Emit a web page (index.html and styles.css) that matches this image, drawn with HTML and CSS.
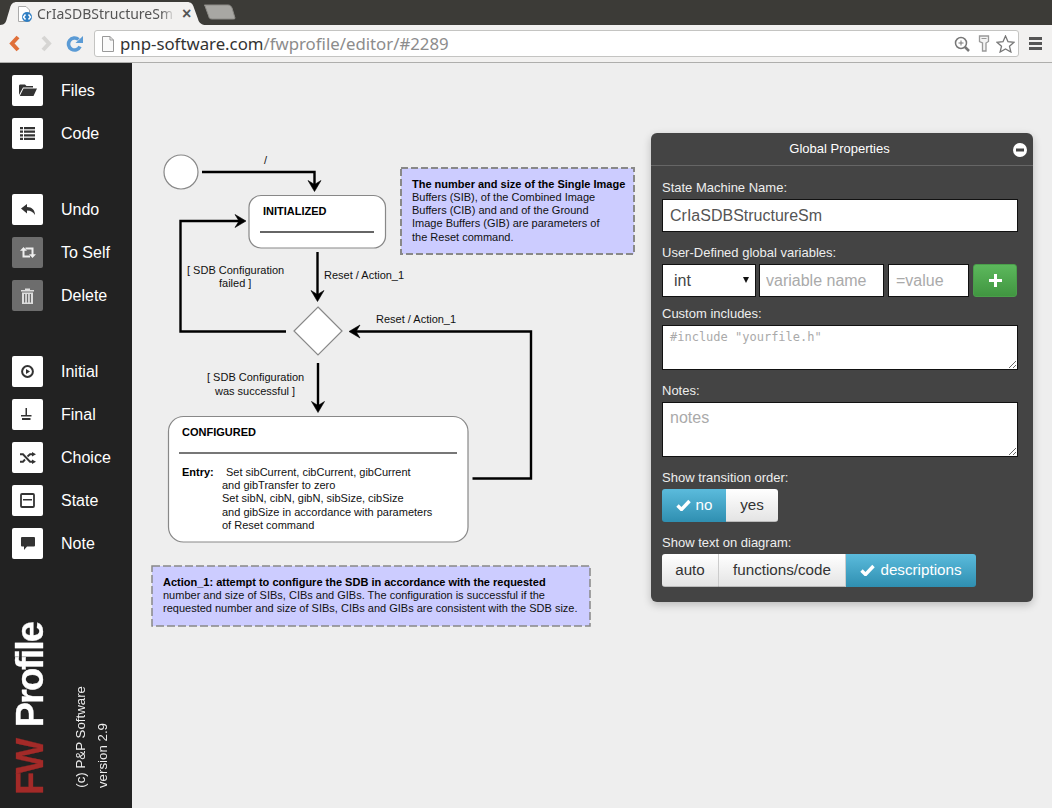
FILE: index.html
```html
<!DOCTYPE html>
<html lang="en">
<head>
<meta charset="utf-8">
<title>FW Profile editor</title>
<link rel="stylesheet" href="styles.css">
</head>
<body>
<header class="browser">
  <div class="tabstrip">
    <div class="tab">
      <svg class="tab-shape" width="212" height="23" viewBox="0 0 212 23"><path d="M0 23C5 23 6 20 7 16L10 6C11 2 13 0 17 0H187C191 0 193 2 194 6L198 17C199 21 202 23 206 23Z" fill="#f2f1f0"/></svg>
      <svg class="favicon" width="16" height="16" viewBox="0 0 16 16"><path d="M1.500.5H9L12.500 4V15.500H1.500Z" fill="#fff" stroke="#aaa"/><circle cx="10" cy="11" r="5" fill="#2f7fc4"/><path d="M8.500 8.500 6.500 11 8.500 13.500M11.500 8.500 13.500 11 11.500 13.500" fill="none" stroke="#fff" stroke-width="1.500"/></svg>
      <span class="tab-title">CrIaSDBStructureSm</span>
      <span class="tab-close">×</span>
    </div>
    <svg class="newtab" width="32" height="16" viewBox="0 0 32 16"><path d="M1 1H24C26 1 27 2 28 4L31 14C31 15 30 15 29 15H8C6 15 5 14 5 13L1 2C0 1 0 1 1 1Z" fill="#a8a7a3" stroke="#8c8b87"/></svg>
  </div>
  <div class="toolbar">
    <svg class="nav back" width="12" height="17" viewBox="0 0 12 17"><path d="M9 2 3 8.500 9 15" fill="none" stroke="#e0703a" stroke-width="4"/></svg>
    <svg class="nav fwd" width="12" height="17" viewBox="0 0 12 17"><path d="M3 2 9 8.500 3 15" fill="none" stroke="#d6d5d3" stroke-width="4"/></svg>
    <svg class="nav reload" width="18" height="17" viewBox="0 0 18 17"><path d="M14 11.500A6 6 0 1 1 12.500 4.500" fill="none" stroke="#5b9bd5" stroke-width="3.600"/><path d="M9.500 8H17V1Z" fill="#5b9bd5"/></svg>
    <div class="omnibox">
      <svg width="12" height="16" viewBox="0 0 12 16"><path d="M.5.500H8L11.500 4V15.500H.5Z" fill="#fafafa" stroke="#999"/><path d="M8 .5V4H11.500" fill="none" stroke="#999"/></svg>
      <span class="url"><b>pnp-software.com</b>/fwprofile/editor/#2289</span>
      <svg class="omni-icon" width="16" height="16" viewBox="0 0 16 16"><circle cx="7" cy="7" r="5.500" fill="none" stroke="#777" stroke-width="1.500"/><path d="M11 11 15 15" stroke="#777" stroke-width="2.500"/><path d="M4.500 7H9.500M7 4.500V9.500" stroke="#777"/></svg>
      <svg class="omni-icon" width="12" height="17" viewBox="0 0 12 17"><path d="M1.500 1H10.500V6.500L8 8V16H4.500V8L1.500 6.500Z" fill="#f4f4f4" stroke="#999" stroke-width="1.300"/><path d="M3.500 3.500H8.500" stroke="#999"/></svg>
      <svg class="omni-icon star" width="19" height="18" viewBox="0 0 19 18"><path d="M9.500 1 12 6.700 18 7.300 13.500 11.300 14.900 17 9.500 14 4.100 17 5.500 11.300 1 7.300 7 6.700Z" fill="#fff" stroke="#777" stroke-width="1.300"/></svg>
    </div>
    <div class="menu"><i></i><i></i><i></i></div>
  </div>
</header>

<div class="app">
  <aside class="sidebar">
    <nav class="tools">
      <div class="toolgroup">
        <div class="tool"><span class="tool-btn"><svg width="18" height="14" viewBox="0 0 18 14"><path d="M0 11V2C0 1 .6.500 1.500.5H6L7.500 2H14V3.500H4L0 11ZM4.500 4.500H18L14.500 12H.8Z" fill="#333"/></svg></span>Files</div>
        <div class="tool"><span class="tool-btn"><svg width="15" height="13" viewBox="0 0 15 13"><path d="M0 0H3V2.200H0ZM4 0H15V2.200H4ZM0 3.600H3V5.800H0ZM4 3.600H15V5.800H4ZM0 7.200H3V9.400H0ZM4 7.200H15V9.400H4ZM0 10.800H3V13H0ZM4 10.800H15V13H4Z" fill="#333"/></svg></span>Code</div>
      </div>
      <div class="toolgroup">
        <div class="tool"><span class="tool-btn"><svg width="14" height="11" viewBox="0 0 14 11"><path d="M0 4.500 6 0V3C11 3 14 6 14 11 12 8 10 6.500 6 6.500V9.500Z" fill="#333"/></svg></span>Undo</div>
        <div class="tool"><span class="tool-btn off"><svg width="16" height="11" viewBox="0 0 16 11"><path d="M3.500 3V9.500H10M5.500 1.500H12.500V8" fill="none" stroke="#eee" stroke-width="2"/><path d="M0 3.800 3.500 0 7 3.800ZM9 7.200H16L12.500 11Z" fill="#eee"/></svg></span>To Self</div>
        <div class="tool"><span class="tool-btn off"><svg width="13" height="16" viewBox="0 0 13 16"><path d="M0 2H4V.5H9V2H13V3.500H0ZM1 4.500H12V16H1ZM3 6V14.500H4.200V6ZM5.900 6V14.500H7.100V6ZM8.800 6V14.500H10V6Z" fill="#ddd" fill-rule="evenodd"/></svg></span>Delete</div>
      </div>
      <div class="toolgroup">
        <div class="tool"><span class="tool-btn"><svg width="13" height="13" viewBox="0 0 13 13"><circle cx="6.500" cy="6.500" r="5.400" fill="none" stroke="#333" stroke-width="2"/><path d="M5 4 9 6.500 5 9Z" fill="#333"/></svg></span>Initial</div>
        <div class="tool"><span class="tool-btn"><svg width="13" height="13" viewBox="0 1 13 13"><path d="M4.500 1H6V8H10.500V9.500H0V8H4.500ZM1 11H9.500V13H1Z" fill="#333"/></svg></span>Final</div>
        <div class="tool"><span class="tool-btn"><svg width="16" height="12" viewBox="0 -.5 16 12"><path d="M0 1.800H3L10 9.200H12.500M0 9.200H3L5 7M7.500 4 10 1.800H12.500" fill="none" stroke="#333" stroke-width="1.900"/><path d="M12 -.4 16 1.800 12 4ZM12 7 16 9.200 12 11.400Z" fill="#333"/></svg></span>Choice</div>
        <div class="tool"><span class="tool-btn"><svg width="15" height="15" viewBox="0 0 15 15"><path d="M2 1H13Q14 1 14 2V13Q14 14 13 14H2Q1 14 1 13V2Q1 1 2 1Z" fill="none" stroke="#333" stroke-width="1.800"/><path d="M3 6H12V7.500H3Z" fill="#333"/></svg></span>State</div>
        <div class="tool"><span class="tool-btn"><svg width="14" height="13" viewBox="0 0 14 13"><path d="M1 0H13Q14 0 14 1V8.500Q14 9.500 13 9.500H6L3 13V9.500H1Q0 9.500 0 8.500V1Q0 0 1 0Z" fill="#333"/></svg></span>Note</div>
      </div>
    </nav>
    <div class="brand">
      <div class="logo"><span class="logo-fw">FW</span> Profile</div>
      <div class="credit">(c) P&amp;P Software</div>
      <div class="credit">version 2.9</div>
    </div>
  </aside>

  <main class="canvas">
    <svg class="diagram" width="519" height="600" viewBox="132 63 519 600">
      <defs>
        <path id="ah" d="M0 0-6.500-11 0-7 6.500-11Z" fill="#000" stroke="#000" stroke-width=".6"/>
      </defs>
      <rect class="note" x="401" y="168" width="233" height="86"/>
      <rect class="note thin" x="152" y="566" width="438" height="60"/>
      <circle class="node" cx="181" cy="172" r="17"/>
      <rect class="node" x="249" y="195.500" width="136.500" height="52.500" rx="12"/>
      <path class="rule" d="M260 232H374"/>
      <path class="node" d="M318 307 342 331 318 355 294 331Z"/>
      <rect class="node" x="168.500" y="416.500" width="299.500" height="125.500" rx="15"/>
      <path class="rule light" d="M179 453H457"/>

      <path class="edge" d="M202 172H314.500V186"/>
      <use href="#ah" transform="translate(314.500 191.500)"/>
      <path class="edge" d="M286 331.500H180.500V221H240"/>
      <use href="#ah" transform="translate(246 221) rotate(-90)"/>
      <path class="edge" d="M317.500 252V296"/>
      <use href="#ah" transform="translate(317.500 301.500)"/>
      <path class="edge" d="M472.500 478.500H531V331.500H354"/>
      <use href="#ah" transform="translate(349 331.500) rotate(90)"/>
      <path class="edge" d="M318 363V407"/>
      <use href="#ah" transform="translate(318 412.500)"/>

      <text x="264" y="164">/</text>
      <text class="strong" x="263" y="215">INITIALIZED</text>
      <text x="187" y="274">[ SDB Configuration</text>
      <text x="219" y="287">failed ]</text>
      <text x="324" y="279">Reset / Action_1</text>
      <text x="376" y="323">Reset / Action_1</text>
      <text x="207" y="381">[ SDB Configuration</text>
      <text x="215" y="395">was successful ]</text>
      <text class="strong" x="182" y="436">CONFIGURED</text>
      <text class="strong" x="182" y="476">Entry:</text>
      <text x="226" y="476">Set sibCurrent, cibCurrent, gibCurrent</text>
      <text x="222" y="489">and gibTransfer to zero</text>
      <text x="222" y="502">Set sibN, cibN, gibN, sibSize, cibSize</text>
      <text x="222" y="516">and gibSize in accordance with parameters</text>
      <text x="222" y="529">of Reset command</text>

      <text class="strong" x="412" y="188">The number and size of the Single Image</text>
      <text x="412" y="201">Buffers (SIB), of the Combined Image</text>
      <text x="412" y="214">Buffers (CIB) and and of the Ground</text>
      <text x="412" y="227">Image Buffers (GIB) are parameters of</text>
      <text x="412" y="241">the Reset command.</text>

      <text class="strong" x="163" y="586">Action_1: attempt to configure the SDB in accordance with the requested</text>
      <text x="163" y="599">number and size of SIBs, CIBs and GIBs. The configuration is successful if the</text>
      <text x="163" y="612">requested number and size of SIBs, CIBs and GIBs are consistent with the SDB size.</text>
    </svg>

    <section class="panel">
      <div class="panel-head">
        <span>Global Properties</span>
        <svg class="collapse" width="14" height="14" viewBox="0 0 14 14"><circle cx="7" cy="7" r="7" fill="#fff"/><rect x="3" y="5.500" width="8" height="3" fill="#444"/></svg>
      </div>
      <form class="panel-body">
        <label class="field-label">State Machine Name:</label>
        <input class="control name" type="text" value="CrIaSDBStructureSm">
        <label class="field-label gap-l">User-Defined global variables:</label>
        <div class="var-row">
          <div class="select-wrap"><select class="control var-type"><option>int</option></select></div>
          <input class="control var-name" type="text" placeholder="variable name">
          <input class="control var-value" type="text" placeholder="=value">
          <button type="button" class="add"><svg width="13" height="13" viewBox="0 0 13 13"><path d="M5 0H8V5H13V8H8V13H5V8H0V5H5Z" fill="#fff"/></svg></button>
        </div>
        <label class="field-label gap-s">Custom includes:</label>
        <textarea class="control includes" placeholder="#include &quot;yourfile.h&quot;"></textarea>
        <label class="field-label gap-m">Notes:</label>
        <textarea class="control notes" placeholder="notes"></textarea>
        <label class="field-label gap-m">Show transition order:</label>
        <div class="btn-group">
          <span class="seg on w-no"><svg class="tick" width="15" height="12" viewBox="0 0 15 12"><path d="M1.500 6.500 5.500 10.500 13.500 2" fill="none" stroke="#fff" stroke-width="3.400"/></svg>no</span>
          <span class="seg w-yes">yes</span>
        </div>
        <label class="field-label gap-m">Show text on diagram:</label>
        <div class="btn-group">
          <span class="seg w-auto">auto</span>
          <span class="seg w-fn">functions/code</span>
          <span class="seg on w-desc"><svg class="tick" width="15" height="12" viewBox="0 0 15 12"><path d="M1.500 6.500 5.500 10.500 13.500 2" fill="none" stroke="#fff" stroke-width="3.400"/></svg>descriptions</span>
        </div>
      </form>
    </section>
  </main>
</div>
</body>
</html>
```
FILE: styles.css
```css
* { box-sizing: border-box; }
html, body { margin: 0; height: 100%; overflow: hidden; }
body {
  display: flex;
  flex-direction: column;
  font-family: "Liberation Sans", Arial, sans-serif;
  background: #eee;
}

/* browser chrome */
.browser { flex: none; height: 63px; }
.tabstrip {
  height: 25px;
  background: #3c3b37;
  display: flex;
  align-items: flex-end;
}
.tab {
  position: relative;
  width: 212px;
  height: 23px;
  display: flex;
  align-items: center;
  padding-left: 17px;
}
.tab-shape { position: absolute; left: 0; top: 0; }
.favicon { position: relative; flex: none; }
.tab-title {
  position: relative;
  margin-left: 4px;
  width: 138px;
  overflow: hidden;
  white-space: nowrap;
  font: 14px "Noto Sans", sans-serif;
  color: #555;
  -webkit-mask-image: linear-gradient(to right, #000 90%, transparent);
  mask-image: linear-gradient(to right, #000 90%, transparent);
}
.tab-close { position: relative; margin-left: 7px; font: bold 16px "Liberation Sans", sans-serif; color: #555; }
.newtab { margin: 0 0 5px -8px; }
.toolbar {
  height: 38px;
  background: #f2f1f0;
  border-bottom: 1px solid #aeaeac;
  display: flex;
  align-items: center;
  padding: 0 0 0 9px;
}
.nav { flex: none; }
.fwd { margin-left: 19px; }
.reload { margin-left: 14px; }
.omnibox {
  margin-left: 10px;
  width: 925px;
  height: 27px;
  background: #fff;
  border: 1px solid #c4c4c2;
  border-radius: 3px;
  display: flex;
  align-items: center;
  padding: 0 3px 0 7px;
}
.url {
  margin-left: 6px;
  flex: 1;
  font: 16.800px "Noto Sans", sans-serif;
  color: #8c8c8c;
}
.url b { font-weight: 400; color: #333; }
.omni-icon { flex: none; margin-left: 8px; }
.omni-icon.star { margin-left: 6px; }
.menu { margin-left: 10px; width: 13px; display: flex; flex-direction: column; gap: 2px; }
.menu i { height: 3px; background: #555; }

/* app */
.app { flex: 1; display: flex; min-height: 0; }
.sidebar {
  flex: none;
  width: 132px;
  background: #222;
  padding: 12px 0 0 12px;
  display: flex;
  flex-direction: column;
}
.tools { display: flex; flex-direction: column; gap: 45px; }
.toolgroup { display: flex; flex-direction: column; gap: 12px; }
.tool {
  display: flex;
  align-items: center;
  gap: 18px;
  height: 31px;
  font-size: 16px;
  color: #fff;
}
.tool-btn {
  width: 31px;
  height: 31px;
  background: #fff;
  border-radius: 2px;
  display: flex;
  align-items: center;
  justify-content: center;
}
.tool-btn.off { background: #6d6d6d; }
.brand {
  margin-top: auto;
  height: 190px;
  padding-bottom: 13px;
  display: flex;
  align-items: flex-end;
}
.logo, .credit {
  writing-mode: vertical-rl;
  transform: rotate(180deg);
  white-space: nowrap;
}
.logo {
  font-size: 38px;
  font-weight: 700;
  line-height: 34px;
  width: 34px;
  margin-left: 1px;
  color: #fff;
  letter-spacing: -2px;
  word-spacing: 4px;
  -webkit-text-stroke: .3px currentColor;
}
.logo-fw { color: #a32a28; }
.credit { font-size: 13.300px; color: #eee; line-height: 15px; width: 15px; margin-left: 7px; margin-bottom: 7px; }
.credit:nth-child(2) { margin-left: 26px; }

.canvas { flex: 1; display: flex; align-items: flex-start; padding-top: 70px; min-width: 0; }
.diagram { flex: none; margin-top: -70px; }
.diagram text { font-size: 11px; fill: #111; font-family: "Liberation Sans", Arial, sans-serif; }
.diagram text.strong { font-weight: 700; fill: #000; }
.node { fill: #fff; stroke: #888; stroke-width: 1.200; }
.rule { stroke: #333; stroke-width: 1.300; fill: none; }
.rule.light { stroke: #777; stroke-width: 1.800; }
.edge { stroke: #000; stroke-width: 2.400; fill: none; }
.note { fill: #ccf; stroke: #888; stroke-width: 2; stroke-dasharray: 7 3; }
.note.thin { stroke-width: 1.500; stroke-dasharray: 8 3; }

/* panel */
.panel {
  flex: none;
  width: 382px;
  height: 469px;
  background: #444;
  border-radius: 6px;
  box-shadow: 0 3px 8px rgba(0,0,0,.22);
  color: #eee;
}
.panel-head {
  position: relative;
  height: 33px;
  border-bottom: 1px solid #666;
  padding-right: 5px;
  font-size: 13px;
  color: #fff;
  text-align: center;
  line-height: 31px;
}
.collapse { position: absolute; right: 6px; top: 10px; }
.panel-body { padding: 14px 15px 0 11px; display: flex; flex-direction: column; align-items: flex-start; }
.field-label { font-size: 13px; line-height: 15px; color: #eee; margin-bottom: 4px; }
.gap-l { margin-top: 13px; }
.gap-s { margin-top: 9px; }
.gap-m { margin-top: 13px; }
.control {
  display: block;
  margin: 0;
  background: #fff;
  border: 1px solid #111;
  border-radius: 0;
  font: 16px "Liberation Sans", Arial, sans-serif;
  color: #555;
  outline: none;
}
.control::placeholder { color: #aaa; opacity: 1; }
.name { width: 356px; height: 33px; padding: 0 7px; margin-top: 0; }
.var-row { display: flex; height: 33px; width: 356px; }
.select-wrap { position: relative; width: 94px; height: 33px; }
.select-wrap::after {
  content: "";
  position: absolute;
  right: 7px;
  top: 13px;
  border-left: 3px solid transparent;
  border-right: 3px solid transparent;
  border-top: 6px solid #111;
}
.var-type { width: 94px; height: 33px; padding-left: 11px; color: #444; appearance: none; -webkit-appearance: none; }
.var-name { width: 125px; height: 33px; margin-left: 3px; padding: 0 6px; }
.var-value { width: 81px; height: 33px; margin-left: 4px; padding: 0 7px; }
.add {
  width: 44px;
  height: 33px;
  margin-left: 4px;
  padding: 0;
  border: 1px solid #4a9f4a;
  border-radius: 3px;
  background: linear-gradient(#5cb85c, #419641);
  display: flex;
  align-items: center;
  justify-content: center;
}
.includes, .notes { width: 356px; padding: 6px 7px; resize: vertical; }
.includes { height: 45px; padding-top: 4px; font: 12px "DejaVu Sans Mono", monospace; }
.notes { height: 55px; }
.btn-group { display: flex; height: 33px; }
.seg {
  display: flex;
  align-items: center;
  justify-content: center;
  height: 33px;
  padding-bottom: 1px;
  font-size: 15.200px;
  color: #333;
  background: linear-gradient(#fff, #e4e4e4);
  border-right: 1px solid #ccc;
  border-bottom: 1px solid #bbb;
}
.seg:first-child { border-radius: 3px 0 0 3px; }
.seg:last-child { border-radius: 0 3px 3px 0; border-right: 0; }
.seg.on {
  color: #fff;
  background: linear-gradient(#5bbbdc, #2f8fb1);
  border: 0;
  padding-bottom: 2px;
}
.tick { margin-right: 5px; }
.w-no { width: 64px; }
.w-yes { width: 52px; }
.w-auto { width: 57px; }
.w-fn { width: 127px; }
.w-desc { width: 130px; }
```
